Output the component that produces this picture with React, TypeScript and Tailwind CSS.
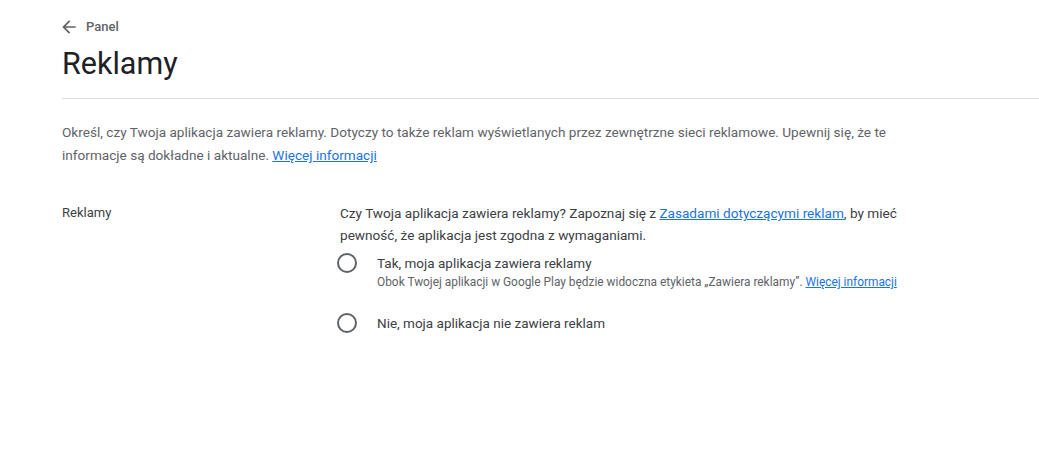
import React from "react";

export default function App() {
  return (
    <div className="min-h-[450px] w-full bg-white font-['Roboto','Liberation_Sans',sans-serif]">
      <div className="pl-[62px] pt-[18px]">
        <div className="flex h-[18px] items-center gap-[7px] text-[13px] leading-[18px] text-[#5f6368]">
          <svg width="20" height="20" viewBox="0 0 24 24" fill="#5f6368" className="ml-[-3px]">
            <path d="M20 11H7.83l5.59-5.59L12 4l-8 8 8 8 1.41-1.41L7.83 13H20v-2z" />
          </svg>
          <span className="font-medium">Panel</span>
        </div>
        <h1 className="mt-[8px] text-[30.5px] leading-[40px] font-normal text-[#202124]">Reklamy</h1>
      </div>
      <div className="ml-[62px] mt-[14px] h-px bg-[#dadce0]" />
      <div className="pl-[62px]">
        <p className="mt-[22px] max-w-[840px] text-[13.6px] leading-[23px] text-[#5f6368]">
          Określ, czy Twoja aplikacja zawiera reklamy. Dotyczy to także reklam wyświetlanych przez zewnętrzne sieci reklamowe. Upewnij się, że te informacje są dokładne i aktualne.{" "}
          <a className="text-[#1a73e8] underline">Więcej informacji</a>
        </p>
        <div className="mt-[35px] flex">
          <div className="w-[278px] shrink-0 text-[13px] leading-[22px] text-[#3c4043]">Reklamy</div>
          <div className="w-[565px]">
            <p className="text-[13.6px] leading-[22px] text-[#3c4043]">
              Czy Twoja aplikacja zawiera reklamy? Zapoznaj się z{" "}
              <a className="text-[#1a73e8] underline">Zasadami dotyczącymi reklam</a>, by mieć pewność, że aplikacja jest zgodna z wymaganiami.
            </p>
            <div className="mt-[7px] flex flex-col gap-[22px]">
              <div className="flex items-start gap-[20px] ml-[-3px]">
                <span className="h-[20px] w-[20px] shrink-0 rounded-full border-2 border-[#5f6368]" />
                <div>
                  <div className="text-[13.5px] leading-[20px] text-[#3c4043]">Tak, moja aplikacja zawiera reklamy</div>
                  <div className="mt-[1px] text-[11.9px] leading-[17px] text-[#5f6368]">
                    Obok Twojej aplikacji w Google Play będzie widoczna etykieta „Zawiera reklamy”.{" "}
                    <a className="text-[#1a73e8] underline">Więcej informacji</a>
                  </div>
                </div>
              </div>
              <div className="flex items-start gap-[20px] ml-[-3px]">
                <span className="h-[20px] w-[20px] shrink-0 rounded-full border-2 border-[#5f6368]" />
                <div className="text-[13.5px] leading-[20px] text-[#3c4043]">Nie, moja aplikacja nie zawiera reklam</div>
              </div>
            </div>
          </div>
        </div>
      </div>
    </div>
  );
}
